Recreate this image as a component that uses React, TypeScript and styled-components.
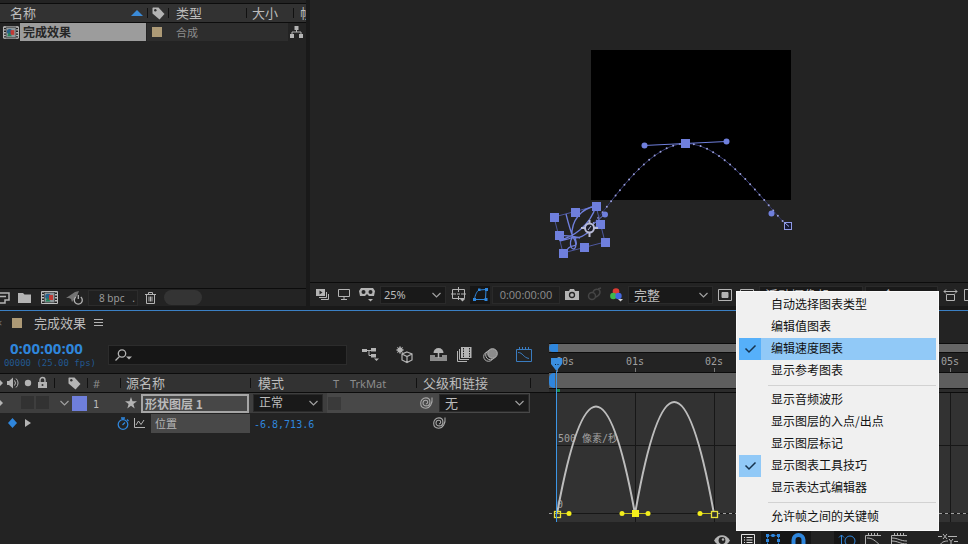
import React from "react";
import styled, { createGlobalStyle, css } from "styled-components";

const sans = `"Noto Sans", "Noto Sans CJK SC", sans-serif`;
const cjk = `"Noto Sans CJK SC", sans-serif`;
const mono = `"DejaVu Sans Mono", "Noto Sans CJK SC", monospace`;

const c = {
  panel: "#232323",
  gap: "#191919",
  head: "#323232",
  line: "#0c0c0c",
  field: "#191919",
  text: "#bcbcbc",
  dim: "#8c8c8c",
  icon: "#b4b4b4",
  blue: "#2f86dc",
  lilac: "#6f7fdc",
};

const GlobalStyle = createGlobalStyle`
  *, *::before, *::after { box-sizing: border-box; }
  body { margin: 0; background: ${c.gap}; overflow: hidden; }
  button, input, select { font: inherit; color: inherit; margin: 0; }
  svg { display: block; flex: none; overflow: visible; }
`;

const Page = styled.div`
  position: relative;
  min-height: 100vh;
  display: flex;
  flex-direction: column;
  overflow: hidden;
  font: 13px/18px ${cjk};
  color: ${c.text};
`;

const Upper = styled.div`
  flex: 1;
  display: grid;
  grid-template-columns: minmax(0, 306fr) minmax(0, 658fr);
  gap: 4px;
  padding-bottom: 4px;
`;

const Panel = styled.section`
  display: flex;
  flex-direction: column;
  min-width: 0;
  overflow: hidden;
  background: ${c.panel};
`;

const Toolbar = styled.div<{ $h: number }>`
  display: flex;
  align-items: center;
  gap: 2px;
  height: ${(p) => p.$h}px;
  padding-left: 2px;
  border-top: 1px solid ${c.line};
  overflow: hidden;
`;

const IconButton = styled.button<{ $w?: number; $on?: boolean }>`
  display: flex;
  flex: none;
  align-items: center;
  justify-content: center;
  width: ${(p) => p.$w ?? 20}px;
  height: 18px;
  padding: 0;
  border: 0;
  color: ${(p) => (p.$on ? c.blue : c.icon)};
  background: ${(p) => (p.$on ? "#161616" : "none")};
`;

/* project panel */

const ProjectTable = styled.table`
  width: 100%;
  margin-top: 3px;
  table-layout: fixed;
  border-collapse: separate;
  border-spacing: 0;
`;

const headCell = css`
  height: 20px;
  padding: 0 0 0 8px;
  border: solid ${c.line};
  border-width: 1px 0;
  background: ${c.head};
  font-weight: 400;
  text-align: left;
  white-space: nowrap;
  overflow: hidden;
`;

const Th = styled.th<{ $bar?: boolean; $pad?: number }>`
  ${headCell}
  padding-left: ${(p) => p.$pad ?? 8}px;
  background: ${(p) =>
    p.$bar ? `linear-gradient(#111, #111) 0 4px / 1px 10px no-repeat ${c.head}` : c.head};
`;

const HeadFlex = styled.div<{ $gap?: number }>`
  display: flex;
  align-items: center;
  gap: ${(p) => p.$gap ?? 6}px;
`;

const Push = styled.span`
  margin-left: auto;
  padding-right: 4px;
`;

const ProjTd = styled.td<{ $shade?: boolean }>`
  height: 18px;
  padding: 0 0 0 8px;
  background: ${(p) => (p.$shade ? "#2d2d2d" : "none")};
  color: ${c.dim};
  font-size: 11px;
  &:first-child { padding: 0 1px 0 3px; }
  &:nth-child(2) { padding-left: 5px; }
`;

const FlowCell = styled(ProjTd)`
  padding: 0 3px 0 0;
  background: linear-gradient(90deg, #2d2d2d 42px, transparent 42px);
  svg { margin-left: auto; }
`;

const ItemName = styled.span`
  flex: 1;
  height: 18px;
  padding-left: 3px;
  background: #9c9c9c;
  color: #262626;
  font-size: 12px;
  font-weight: 700;
`;

const Swatch = styled.span<{ $c: string; $s: number }>`
  display: block;
  flex: none;
  width: ${(p) => p.$s}px;
  height: ${(p) => p.$s}px;
  background: ${(p) => p.$c};
`;

const Spacer = styled.div`
  flex: 1;
`;

const DepthButton = styled.button`
  flex: none;
  width: 50px;
  height: 16px;
  padding: 0 0 0 8px;
  border: 1px solid #2c2c2c;
  background: #202020;
  color: #9a9a9a;
  font: 10px/14px ${sans};
`;

const Pill = styled.span`
  width: 38px;
  height: 15px;
  margin-left: 2px;
  border-radius: 8px;
  background: #343434;
`;

/* viewer */

const Canvas = styled.div`
  flex: 1;
  display: flex;
  overflow: hidden;
  svg { width: 100%; height: 100%; }
`;

const SelectBox = styled.label<{ $w?: number }>`
  display: grid;
  align-items: center;
  flex: none;
  width: ${(p) => (p.$w ? `${p.$w}px` : "100%")};
  height: 18px;
  border: 1px solid #2a2a2a;
  background: ${c.field};
  > * { grid-area: 1 / 1; }
  > svg { justify-self: end; margin-right: 4px; pointer-events: none; }
`;

const Select = styled.select<{ $fs?: number; $pad?: number }>`
  width: 100%;
  height: 16px;
  padding: 0 0 0 ${(p) => p.$pad ?? 5}px;
  border: 0;
  appearance: none;
  background: none;
  color: ${c.text};
  font: ${(p) => p.$fs ?? 13}px/16px ${sans};
`;

const TimeField = styled.button`
  flex: none;
  width: 68px;
  height: 18px;
  padding: 0;
  border: 1px solid #2a2a2a;
  background: #1e1e1e;
  color: #8e8e8e;
  font: 11px/16px "Open Sans", sans-serif;
`;

/* timeline */

const Timeline = styled.section`
  display: flex;
  flex-direction: column;
  border-top: 1px solid #3b80c4;
  background: ${c.panel};
`;

const TabRow = styled.div`
  display: flex;
  align-items: center;
  height: 25px;
  padding-bottom: 2px;
`;

const CloseTab = styled.button`
  width: 12px;
  padding: 0;
  border: 0;
  background: none;
  color: #777;
  font: 11px/18px ${sans};
  text-align: left;
  text-indent: -4px;
`;

const TabName = styled.h2`
  margin: 0 8px 0 12px;
  font-size: 13px;
  font-weight: 400;
  line-height: 18px;
`;

const Split = styled.div`
  display: grid;
  grid-template-columns: minmax(0, 549fr) minmax(0, 419fr);
`;

const Side = styled.div`
  min-width: 0;
  overflow: hidden;
`;

const TimeRow = styled.div`
  display: flex;
  align-items: center;
  height: 37px;
  padding-right: 12px;
`;

const TimeBlock = styled.div`
  width: 108px;
  flex: none;
`;

const Timecode = styled.div`
  padding-left: 10px;
  color: ${c.blue};
  font: 700 15px/16px "Open Sans", sans-serif;
`;

const Fps = styled.div`
  display: flex;
  justify-content: flex-end;
  width: 96px;
  color: #22588f;
  font: 9px/14px ${mono};
  white-space: nowrap;
`;

const Search = styled.label`
  display: flex;
  align-items: center;
  flex: 1;
  height: 20px;
  margin-right: 10px;
  padding-left: 6px;
  border: 1px solid #2c2c2c;
  background: #161616;
  color: ${c.icon};
`;

const SearchInput = styled.input`
  flex: 1;
  min-width: 0;
  padding: 0 4px;
  border: 0;
  outline: 0;
  background: none;
`;

const Group = styled.div`
  display: flex;
  margin-right: 8px;
  &:last-child { margin-right: 0; }
`;

const LayerTable = styled.table`
  width: 100%;
  table-layout: fixed;
  border-collapse: separate;
  border-spacing: 0;
`;

const Small = styled.span`
  color: ${c.dim};
  font: 11px/16px ${sans};
`;

const Index = styled.span`
  color: ${c.text};
  font: 10px/16px ${mono};
`;

const Td = styled.td<{ $bg?: string; $pad?: number }>`
  height: 20px;
  padding: 0 0 0 ${(p) => p.$pad ?? 0}px;
  background: ${(p) => p.$bg ?? "none"};
`;

const Cells = styled.div<{ $gap?: number; $end?: boolean }>`
  display: flex;
  align-items: center;
  height: 20px;
  gap: ${(p) => p.$gap ?? 4}px;
  justify-content: ${(p) => (p.$end ? "flex-end" : "flex-start")};
`;

const NameInput = styled.input`
  flex: 1;
  min-width: 0;
  height: 19px;
  margin-right: 1px;
  padding: 0 2px;
  border: 2px solid #a6a6a6;
  outline: 0;
  background: #474747;
  color: #bababa;
  font: 700 12px/15px ${cjk};
`;

const PropName = styled.span`
  width: 99px;
  height: 19px;
  margin-left: 2px;
  padding-left: 4px;
  background: #484848;
  color: #b4b4b4;
  font-size: 11px;
`;

const Value = styled.span`
  color: ${c.blue};
  font: 10px/16px ${mono};
`;

const GraphPane = styled.div`
  position: relative;
  min-width: 0;
  padding-top: 7px;
  overflow: hidden;
`;

const Track = styled.div<{ $h: number; $c: string; $handle: number }>`
  height: ${(p) => p.$h}px;
  border: solid ${c.line};
  border-width: 1px 0;
  background: ${(p) => p.$c};
  &::before {
    content: "";
    display: block;
    width: ${(p) => p.$handle}px;
    height: 100%;
    border-radius: 5px 0 0 5px;
    background: ${c.blue};
  }
`;

const Chart = styled.svg<{ $h: number }>`
  width: 100%;
  height: ${(p) => p.$h}px;
  text { font: 10px ${mono}; fill: #a0a0a0; }
`;

const CacheStrip = styled.div`
  height: 4px;
  border-bottom: 1px solid ${c.line};
  background: linear-gradient(#1d8a4e, #1d8a4e) 8px 0 / 3px 3px no-repeat #2b2b2b;
`;

const Playhead = styled.svg`
  position: absolute;
  top: 22px;
  left: 2px;
  width: 12px;
  height: 164px;
`;

const BottomBar = styled.div`
  display: flex;
  justify-content: flex-end;
  align-items: flex-start;
  height: 22px;
  padding: 9px 7px 0 0;
  overflow: hidden;
`;

const BarGap = styled.span`
  width: 23px;
`;

/* context menu */

const Menu = styled.div`
  position: absolute;
  right: 29px;
  bottom: 13px;
  width: 203px;
  padding: 2px;
  border: 1px solid #fafafa;
  background: #f0f0f0;
  color: #111;
  font: 12px/20px ${cjk};
`;

const MenuItem = styled.button<{ $active?: boolean }>`
  display: flex;
  width: 100%;
  height: 22px;
  padding: 0;
  border: 0;
  background: ${(p) => (p.$active ? "#91c9f7" : "none")};
  text-align: left;
`;

const CheckSlot = styled.span<{ $checked?: boolean; $active?: boolean }>`
  display: flex;
  align-items: center;
  justify-content: center;
  width: 22px;
  height: 22px;
  margin-right: 10px;
  background: ${(p) => (p.$checked ? (p.$active ? "#56b0fa" : "#91c9f7") : "none")};
`;

const Separator = styled.hr`
  height: 1px;
  margin: 3px 0 3px 29px;
  border: 0;
  background: #d2d2d2;
`;

/* icons */

const Chevron = () => (
  <svg width="9" height="6" viewBox="0 0 9 6" fill="none" stroke="#a0a0a0" strokeWidth="1.2">
    <path d="M0.5 1l4 4 4-4" />
  </svg>
);

const TagIcon = () => (
  <svg width="13" height="13" viewBox="0 0 13 13">
    <path d="M1 0.5h5.5l6 6.5-5 5.5L0.5 6.5V1z" fill={c.icon} />
    <circle cx="3.3" cy="3.3" r="1.2" fill={c.head} />
  </svg>
);

const FilmComp = ({ w = 17 }: { w?: number }) => (
  <svg width={w} height="13" viewBox="0 0 17 13">
    <path d="M0.5 0.5h16v12H0.5z" fill="#222" stroke="#c0c0c0" />
    <path d="M2 0v13M15 0v13" stroke="#c0c0c0" strokeWidth="2" strokeDasharray="1.5 1.5" />
    <path d="M3.5 1.500v10h10v-10z" fill="#8f979b" />
    <circle cx="7" cy="5.500" r="2.800" fill="#24608c" />
    <path d="M8 4h4v5H8z" fill="#c03a34" />
    <path d="M6.500 6l3 4.500h-5z" fill="#23835a" />
  </svg>
);

const Swirl = () => (
  <svg width="13" height="12" viewBox="0 0 13 12" fill="none" stroke="#a8a8a8" strokeWidth="1.1">
    <path d="M12 0.5C12.8 6 10 11.2 5.500 11.2 2.500 11.2 0.700 9 0.700 6.300 0.700 3.200 3 0.900 5.900 0.900 8.400 0.900 9.900 2.700 9.900 4.900 9.900 7.300 8.300 8.900 6.200 8.900 4.300 8.900 3 7.700 3 6 3 4.400 4.200 3.200 5.800 3.200 7 3.200 7.700 4 7.700 5.100 7.700 6.200 6.900 6.900 5.900 6.800" />
  </svg>
);

const Handle = ({ x, y }: { x: number; y: number }) => (
  <rect x={x - 4} y={y - 4} width="9" height="9" fill={c.lilac} />
);

const corners = [
  [554, 217], [575, 212], [596, 206], [600, 224],
  [605, 242], [584, 247], [563, 253], [559, 235],
];

const MotionPath = () => (
  <svg role="img" aria-label="合成预览">
    <g transform="translate(-310 0)">
      <rect x="591" y="50" width="200" height="150" fill="#000" />
      <g fill="none">
        <path
          d="M589 228C605 214 644 145 685 143.500C726 142 771 213 788 226"
          stroke="#34386f"
        />
        <path
          d="M589 228C605 214 644 145 685 143.500C726 142 771 213 788 226"
          stroke="#9a9fda"
          strokeWidth="2"
          strokeLinecap="round"
          strokeDasharray="0 7"
        />
        <path d="M644 145.500L726 141.500M589 228L605 214" stroke={c.lilac} />
        <path d="M554 217L596 206 605 242 563 253z" stroke="#4d589f" />
        <path
          d="M559 240C572 238 590 226 596 206C582 208 571 220 572 236M566 214C568 222 570 230 573 237C568 240 562 240 560 241M573 237C569 241 570 249 574 249C577 247 576 241 573 237C580 240 586 234 600 224M566 252C570 240 580 252 575 238M560 236c6-1 12 0 20 2"
          stroke={c.lilac}
          strokeWidth="1.300"
        />
      </g>
      {corners.map(([x, y]) => (
        <Handle key={x} x={x} y={y} />
      ))}
      <g fill={c.lilac}>
        <circle cx="605" cy="214.500" r="3" />
        <circle cx="644.500" cy="145.500" r="3" />
        <circle cx="726.500" cy="141.500" r="3" />
        <circle cx="771.500" cy="213.500" r="3" />
        <rect x="681" y="139" width="9" height="9" />
      </g>
      <g stroke="#b9bcd8" fill="none">
        <circle cx="589.500" cy="228" r="4.500" fill="#1c1d28" strokeWidth="2" />
        <path d="M589.500 220v4M589.500 232v5M581 228h4M594 228h4" strokeWidth="2" />
        <path d="M588 230l3-4" />
      </g>
      <rect x="784.500" y="222.500" width="7" height="7" fill="#161a33" stroke="#8f9ae6" />
      <path d="M785 223l4 3.500" stroke="#9aa4f0" />
    </g>
  </svg>
);

const starts = [0, 78, 157, 236, 315, 393];

const menu: Array<null | { t: string; checked?: boolean; active?: boolean }> = [
  { t: "自动选择图表类型" },
  { t: "编辑值图表" },
  { t: "编辑速度图表", checked: true, active: true },
  { t: "显示参考图表" },
  null,
  { t: "显示音频波形" },
  { t: "显示图层的入点/出点" },
  { t: "显示图层标记" },
  { t: "显示图表工具技巧", checked: true },
  { t: "显示表达式编辑器" },
  null,
  { t: "允许帧之间的关键帧" },
];

type DropDownProps = { label: string; value: string; w?: number; fs?: number; pad?: number };

const DropDown = ({ label, value, w, fs, pad }: DropDownProps) => (
  <SelectBox $w={w}>
    <Select aria-label={label} $fs={fs} $pad={pad} defaultValue={value}>
      <option>{value}</option>
    </Select>
    <Chevron />
  </SelectBox>
);

const ProjectPanel = () => (
  <Panel>
    <ProjectTable>
      <colgroup>
        <col />
        <col width="21" />
        <col width="78" />
        <col width="47" />
        <col width="13" />
      </colgroup>
      <thead>
        <tr>
          <Th $pad={10}>
            <HeadFlex>
              名称
              <Push>
                <svg width="12" height="6" viewBox="0 0 12 6"><path d="M6 0l6 6H0z" fill="#3b8bd8" /></svg>
              </Push>
            </HeadFlex>
          </Th>
          <Th $bar $pad={5}><TagIcon /></Th>
          <Th $bar>类型</Th>
          <Th $bar $pad={6}>大小</Th>
          <Th $bar $pad={7}>帧</Th>
        </tr>
      </thead>
      <tbody>
        <tr>
          <ProjTd>
            <HeadFlex $gap={1}>
              <FilmComp w={16} />
              <ItemName>完成效果</ItemName>
            </HeadFlex>
          </ProjTd>
          <ProjTd $shade><Swatch $c="#ad9a76" $s={10} /></ProjTd>
          <ProjTd $shade>合成</ProjTd>
          <FlowCell colSpan={2}>
            <svg width="13" height="12" viewBox="0 0 13 12">
              <path d="M4.500 0h4v4h-4zM0 8h4v4H0zM9 8h4v4H9z" fill={c.icon} />
              <path d="M6.500 3v3M2 8V6h9v2" stroke={c.icon} fill="none" />
            </svg>
          </FlowCell>
        </tr>
      </tbody>
    </ProjectTable>
    <Spacer />
    <Toolbar $h={18}>
      <IconButton $w={10} aria-label="解释素材">
        <svg width="14" height="12" viewBox="0 0 14 12" fill="none" stroke={c.icon} strokeWidth="1.500">
          <path d="M0 1h9v7H5v3H0M0 4.500h6" />
        </svg>
      </IconButton>
      <IconButton aria-label="新建文件夹">
        <svg width="13" height="10" viewBox="0 0 13 10"><path d="M0 0h5l1.500 1.500H13V10H0z" fill={c.icon} /></svg>
      </IconButton>
      <IconButton $w={26} aria-label="新建合成"><FilmComp /></IconButton>
      <IconButton $w={22} aria-label="项目设置">
        <svg width="18" height="13" viewBox="0 0 18 13">
          <path d="M0 7L9 1l4-1-2 5-5 6-1-3-2-1z" fill="#747474" />
          <path d="M9.800 6a4 4 0 1 0 5 0M12.300 4v4" stroke={c.icon} strokeWidth="1.300" fill="none" />
        </svg>
      </IconButton>
      <DepthButton>8 bpc&nbsp;&nbsp; .</DepthButton>
      <IconButton aria-label="删除">
        <svg width="11" height="12" viewBox="0 0 11 12" fill="none" stroke={c.icon}>
          <path d="M0 2.500h11M3.500 2V0.500h4V2M1.500 3v8.500h8V3M4 4.500v5M5.500 4.500v5M7 4.500v5" />
        </svg>
      </IconButton>
      <Pill />
    </Toolbar>
  </Panel>
);

const ViewerPanel = () => (
  <Panel>
    <Canvas><MotionPath /></Canvas>
    <Toolbar $h={24}>
      <IconButton aria-label="始终预览此视图">
        <svg width="13" height="11" viewBox="0 0 13 11">
          <path d="M0 0h9v7H0z" fill={c.icon} />
          <path d="M3.500 1.500v4l3-2z" fill={c.panel} />
          <path d="M3 8.500h7.500V3M5 10.500h7.500V5" stroke={c.icon} fill="none" />
        </svg>
      </IconButton>
      <IconButton aria-label="主查看器">
        <svg width="12" height="11" viewBox="0 0 12 11" fill="none" stroke={c.icon}>
          <path d="M0.500 0.500h11v7h-11zM6 8v2M3 10.500h6" />
        </svg>
      </IconButton>
      <IconButton $w={22} aria-label="沉浸式视频">
        <svg width="16" height="14" viewBox="0 0 16 14">
          <path d="M2 0h12l2 3-1 5H10L8 6 6 8H1L0 3z" fill={c.icon} />
          <circle cx="4.500" cy="4" r="2" fill={c.panel} />
          <circle cx="11.500" cy="4" r="2" fill={c.panel} />
          <path d="M9 11h5l-2.500 2.500z" fill={c.icon} />
        </svg>
      </IconButton>
      <DropDown label="放大率" value="25%" w={66} fs={11} pad={3} />
      <IconButton aria-label="网格和参考线">
        <svg width="15" height="15" viewBox="0 0 15 15" fill="none" stroke={c.icon}>
          <path d="M1.500 2.500h12v9h-12zM0 7h5M10 7h5M7.500 0v5M7.500 9v4M6 7h3" />
          <path d="M9 12h5l-2.500 2.500z" fill={c.icon} stroke="none" />
        </svg>
      </IconButton>
      <IconButton $on aria-label="切换蒙版可见性">
        <svg width="15" height="13" viewBox="0 0 15 13" fill="none" stroke={c.blue}>
          <path d="M1.500 11.500C2 7 4 3 6 2l7-0.500-0.500 10z" />
          <path d="M0 10h3v3H0zM5 0.500h2.500V3H5zM12 0h3v3h-3zM11.500 10h3v3h-3z" fill={c.blue} stroke="none" />
        </svg>
      </IconButton>
      <TimeField>0:00:00:00</TimeField>
      <IconButton aria-label="拍摄快照">
        <svg width="14" height="11" viewBox="0 0 14 11">
          <path d="M0 2h4l1-2h4l1 2h4v9H0z" fill={c.icon} />
          <circle cx="7" cy="6" r="2.500" fill="none" stroke={c.panel} strokeWidth="1.300" />
        </svg>
      </IconButton>
      <IconButton aria-label="显示快照">
        <svg width="15" height="13" viewBox="0 0 15 13" fill="none" stroke="#454545" strokeWidth="1.500">
          <circle cx="5" cy="8" r="3.500" /><path d="M6 4c2-4 7-3 7 0s-2 4-4 5M11 1l3-1" />
        </svg>
      </IconButton>
      <IconButton aria-label="通道">
        <svg width="13" height="14" viewBox="0 0 13 14">
          <circle cx="6" cy="3.500" r="3.300" fill="#dc3c34" />
          <circle cx="3.300" cy="8" r="3.200" fill="#3eb84c" />
          <circle cx="8.500" cy="8" r="3.200" fill="#4468e0" />
          <path d="M8 11h5l-2.500 2.500z" fill="#d0d0d0" />
        </svg>
      </IconButton>
      <DropDown label="分辨率" value="完整" w={85} />
      <IconButton aria-label="目标区域">
        <svg width="14" height="12" viewBox="0 0 14 12" fill="none" stroke={c.icon}>
          <path d="M0.500 0.500h13v11H0.500z" /><path d="M4 3.500h6v5H4z" fill={c.icon} />
        </svg>
      </IconButton>
      <IconButton aria-label="透明网格">
        <svg width="14" height="12" viewBox="0 0 14 12" fill="none" stroke={c.icon}>
          <path d="M0.500 0.500h13v11H0.500zM4 4h6v4H4z" />
        </svg>
      </IconButton>
      <DropDown label="3D 视图" value="活动摄像机" w={104} />
      <DropDown label="视图布局" value="1 个..." w={73} />
      <IconButton aria-label="像素长宽比校正">
        <svg width="15" height="12" viewBox="0 0 15 12" fill="none" stroke={c.icon}>
          <path d="M1 2.500h13M3 0.500l-2 2 2 2M12 0.500l2 2-2 2M3.500 5.500h8v6h-8z" />
        </svg>
      </IconButton>
      <IconButton aria-label="快速预览">
        <svg width="16" height="12" viewBox="0 0 16 12" fill="none" stroke={c.icon}>
          <path d="M0.500 0.500h15v11H0.500zM4 8l4-3" />
        </svg>
      </IconButton>
    </Toolbar>
  </Panel>
);

const TimelineTools = () => (
  <>
    <Group>
      <IconButton $w={26} aria-label="合成微型流程图">
        <svg width="17" height="15" viewBox="0 0 17 15" fill={c.icon}>
          <path d="M0 2h5v3H0zM9 1h5v3.500H9zM9 7h5v3.500H9z" />
          <path d="M5 3.500h4M7 3v5.500h2" stroke={c.icon} fill="none" />
          <path d="M12 11.500h5L14.500 14z" />
        </svg>
      </IconButton>
    </Group>
    <Group>
      <IconButton $w={26} aria-label="草图 3D">
        <svg width="17" height="17" viewBox="0 0 17 17" fill="none" stroke={c.icon} strokeWidth="1.200">
          <circle cx="4" cy="4" r="2.200" fill={c.icon} />
          <path d="M4 0v8M0 4h8M1.200 1.200l5.600 5.600M6.800 1.200L1.200 6.800" strokeWidth="0.800" />
          <path d="M11 6l5 2v6l-5 2.500L6 14V8zM6 8l5 2.500L16 8M11 10.500v6" />
        </svg>
      </IconButton>
    </Group>
    <Group>
      <IconButton $w={26} aria-label="隐藏图层">
        <svg width="17" height="13" viewBox="0 0 17 13">
          <path d="M0 7h5v2h7V7h5v6H0z" fill="#8c8c8c" />
          <path d="M3.500 5a5 5 0 0 1 10 0z" fill={c.icon} />
          <path d="M8.500 1v9" stroke={c.icon} strokeWidth="1.500" />
        </svg>
      </IconButton>
      <IconButton $w={26} aria-label="帧混合">
        <svg width="15" height="15" viewBox="0 0 15 15">
          <path d="M4 0h10.500v11H4z" fill={c.icon} />
          <path d="M6.500 1v9M12.500 1v9" stroke={c.panel} strokeDasharray="1.500 1" />
          <path d="M2.500 2v10.500H12M0.500 4v10.500H10" stroke={c.icon} fill="none" />
        </svg>
      </IconButton>
      <IconButton $w={26} aria-label="运动模糊">
        <svg width="15" height="14" viewBox="0 0 15 14" stroke={c.icon} fill="none">
          <circle cx="5.500" cy="8.500" r="4.800" /><circle cx="7.500" cy="7" r="4.800" fill={c.panel} />
          <circle cx="9.500" cy="5.500" r="4.800" fill="#8c8c8c" />
        </svg>
      </IconButton>
    </Group>
    <Group>
      <IconButton $w={26} aria-label="图表编辑器">
        <svg width="16" height="15" viewBox="0 0 16 15" fill="none" stroke="#3a7cc0">
          <path d="M0.500 2.500h15v12H0.500zM3.500 0v2M6.500 0v2M9.500 0v2M12.500 0v2M2 5.500c5 0 5 5 11 6" />
        </svg>
      </IconButton>
    </Group>
  </>
);

const Layers = () => (
  <LayerTable>
    <colgroup>
      <col width="54" />
      <col width="33" />
      <col width="33" />
      <col />
      <col width="77" />
      <col width="18" />
      <col width="71" />
      <col width="114" />
      <col width="19" />
    </colgroup>
    <thead>
      <tr>
        <Th $pad={0}>
          <svg width="48" height="12" viewBox="0 0 48 12">
            <path d="M0 3l3 3-3 3zM7 4h2l4-3.500v11L9 8H7z" fill={c.icon} />
            <path d="M14.500 3.500a4 4 0 0 1 0 5M16 1.500a6 6 0 0 1 0 9" stroke={c.icon} fill="none" />
            <circle cx="28" cy="6" r="3.200" fill={c.icon} />
            <path d="M38 5h9v6h-9z" fill={c.icon} />
            <path d="M40 5V3a2.500 2.500 0 0 1 5 0v2" stroke={c.icon} strokeWidth="1.400" fill="none" />
            <circle cx="42.500" cy="8" r="1" fill={c.head} />
          </svg>
        </Th>
        <Th $bar $pad={14}><TagIcon /></Th>
        <Th $bar $pad={6}><Small>#</Small></Th>
        <Th $bar $pad={6}>源名称</Th>
        <Th $bar>模式</Th>
        <Th $pad={6}><Small>T</Small></Th>
        <Th $pad={5}><Small>TrkMat</Small></Th>
        <Th $bar $pad={7}>父级和链接</Th>
        <Th $bar />
      </tr>
    </thead>
    <tbody>
      <tr>
        <Td $bg="#3e3e3e">
          <Cells>
            <svg width="50" height="14" viewBox="0 0 50 14">
              <path d="M0 4l3 3-3 3z" fill={c.icon} />
              <path d="M21 0h13v13H21zM36 0h13v13H36z" fill="#323232" />
            </svg>
          </Cells>
        </Td>
        <Td $bg="#3e3e3e">
          <Cells $gap={3} $end><Chevron /><Swatch $c={c.lilac} $s={15} /></Cells>
        </Td>
        <Td $bg="#3e3e3e" $pad={6}><Index>1</Index></Td>
        <Td $bg="#3e3e3e" $pad={5}>
          <Cells>
            <svg width="12" height="12" viewBox="0 0 12 12">
              <path d="M6 0l1.500 4.200H12L8.400 7 9.700 11.500 6 8.800 2.300 11.500 3.600 7 0 4.200h4.500z" fill={c.icon} />
            </svg>
            <NameInput aria-label="图层名称" defaultValue="形状图层 1" />
          </Cells>
        </Td>
        <Td $bg="#3e3e3e" $pad={3}><DropDown label="模式" value="正常" w={70} fs={12} /></Td>
        <Td $bg="#484848" $pad={1}><Swatch $c="#3a3a3a" $s={13} /></Td>
        <Td $bg="#484848" />
        <Td $bg="#484848" $pad={4}>
          <Cells $gap={6}><Swirl /><DropDown label="父级和链接" value="无" w={90} /></Cells>
        </Td>
        <Td />
      </tr>
      <tr>
        <Td $pad={8}>
          <Cells $gap={8}>
            <svg width="9" height="10" viewBox="0 0 9 10"><path d="M4.500 0L9 5l-4.500 5L0 5z" fill={c.blue} /></svg>
            <svg width="6" height="8" viewBox="0 0 6 8"><path d="M0 0l6 4-6 4z" fill={c.icon} /></svg>
          </Cells>
        </Td>
        <Td colSpan={3}>
          <Cells $end>
            <svg width="12" height="13" viewBox="0 0 12 13" fill="none" stroke={c.blue} strokeWidth="1.300">
              <circle cx="6" cy="7.500" r="4.800" /><path d="M4 1h4M6 1v2M10 2.500l1.500 1.500M5.500 8L8 5.500" />
            </svg>
            <svg width="12" height="11" viewBox="0 0 12 11" fill="none" stroke={c.icon}>
              <path d="M1.500 0v9.500H12M3 7l2.500-4L8 6.500 11 2" />
            </svg>
            <PropName>位置</PropName>
          </Cells>
        </Td>
        <Td colSpan={3} $pad={4}><Value>-6.8,713.6</Value></Td>
        <Td $pad={17}><Swirl /></Td>
        <Td />
      </tr>
    </tbody>
  </LayerTable>
);

const Graph = () => (
  <GraphPane>
    <Track $h={10} $c="#666" $handle={9} />
    <Chart $h={19}>
      {starts.map((s, i) => (
        <g key={s}>
          <text x={i === 0 ? 16 : s + 8} y="12" textAnchor="middle">{`0${i}s`}</text>
          <path d={`M${s + 8}.5 15v4`} stroke="#777" />
        </g>
      ))}
    </Chart>
    <Track $h={17} $c="#5e5e5e" $handle={6} />
    <CacheStrip />
    <Chart $h={129}>
      <rect x="7" y="0" width="100%" height="129" fill="#323232" />
      <g stroke="#171717">
        {starts.slice(1).map((s) => (
          <path key={s} d={`M${s + 8}.5 0v129`} />
        ))}
        <line x1="8" x2="100%" y1="52.500" y2="52.500" />
        <line x1="8" x2="100%" y1="120.500" y2="120.500" />
      </g>
      <line x1="0" x2="8" y1="120.500" y2="120.500" stroke="#999" strokeDasharray="3 3" />
      <line x1="168" x2="100%" y1="120.500" y2="120.500" stroke="#a0a0a0" strokeDasharray="3 3" />
      <text x="9" y="49">500 像素/秒</text>
      <text x="8" y="115">0</text>
      <g fill="none" stroke="#bdbdbd" strokeWidth="2">
        <path d="M8 121Q47 -94 86 121Q125 -103 165 121" />
      </g>
      <g stroke="#c9c21e" fill="none">
        <path d="M8 120.500h13M73 120.500h26M151 120.500h14" />
        <rect x="5.500" y="118.500" width="6" height="6" stroke="#e8e23a" strokeWidth="1.300" />
        <rect x="162.500" y="118.500" width="6" height="6" fill="#323232" stroke="#e8e23a" strokeWidth="1.300" />
      </g>
      <g fill="#f4ee1c">
        <circle cx="20" cy="120.500" r="2.500" />
        <circle cx="73" cy="120.500" r="2.500" />
        <circle cx="99" cy="120.500" r="2.500" />
        <circle cx="151" cy="120.500" r="2.500" />
        <rect x="83" y="117" width="7" height="7" />
      </g>
    </Chart>
    <Playhead>
      <path d="M5.500 13v151" stroke="#3c96e6" />
      <path d="M0 0h11v6l-5.500 7L0 6z" fill="#3a8fe0" />
      <path d="M4 6.500h1M6.500 6.500h1" stroke="#123" />
    </Playhead>
  </GraphPane>
);

const BottomTools = () => (
  <BottomBar>
    <IconButton $w={26} aria-label="选择显示的属性">
      <svg width="16" height="11" viewBox="0 0 16 11">
        <path d="M0 5.500C4-1.500 12-1.500 16 5.500 12 12.500 4 12.500 0 5.500z" fill={c.icon} />
        <circle cx="8" cy="5.500" r="3.400" fill={c.panel} /><circle cx="9" cy="4.500" r="1.200" fill={c.icon} />
      </svg>
    </IconButton>
    <IconButton $w={26} aria-label="选择图表类型和选项">
      <svg width="14" height="13" viewBox="0 0 14 13" fill="none" stroke="#e0e0e0">
        <path d="M0.500 0.500h13v12H0.500zM3 3.500h1M5.500 3.500h6M3 6h1M5.500 6h6M3 8.500h1M5.500 8.500h6" />
      </svg>
    </IconButton>
    <IconButton $on $w={24} aria-label="显示变换框">
      <svg width="16" height="15" viewBox="0 0 16 15" fill={c.blue}>
        <path d="M2.500 2.500h11v10h-11z" fill="none" stroke={c.blue} strokeDasharray="2 1" />
        <path d="M1 1h3v3H1zM6.500 1h3v3h-3zM12 1h3v3h-3zM1 6h3v3H1zM12 6h3v3h-3zM1 11h3v3H1zM12 11h3v3h-3z" />
      </svg>
    </IconButton>
    <IconButton $on $w={26} aria-label="对齐">
      <svg width="15" height="14" viewBox="0 0 15 14" fill="none" stroke={c.blue} strokeWidth="4">
        <path d="M2.500 14V7a5 5 0 0 1 10 0v7" />
      </svg>
    </IconButton>
    <BarGap />
    <IconButton $on $w={26} aria-label="适合选择">
      <svg width="17" height="13" viewBox="0 0 17 13" fill="none" stroke={c.blue}>
        <path d="M2.500 13V1M0 3.500L2.500 1 5 3.500" /><circle cx="11" cy="7" r="5" />
      </svg>
    </IconButton>
    <IconButton $w={26} aria-label="使选择适于查看">
      <svg width="16" height="14" viewBox="0 0 16 14" fill="none" stroke={c.icon}>
        <path d="M0.500 14V2.500H16M3.500 0v2M6.500 0v2M9.500 0v2M12.500 0v2M2 5c6 0 8 3 13 7" />
      </svg>
    </IconButton>
    <IconButton $w={26} aria-label="使所有图表适于查看">
      <svg width="16" height="14" viewBox="0 0 16 14" fill="none" stroke={c.icon}>
        <path d="M0.500 14V2.500H16M3.500 0v2M6.500 0v2M9.500 0v2M12.500 0v2M1 5c6 0 8 3 15 3M1 8c6 0 8 3 15 3" />
      </svg>
    </IconButton>
    <BarGap />
    <IconButton $w={26} aria-label="单独尺寸">
      <svg width="20" height="14" viewBox="0 0 20 14" fill="none" stroke={c.icon}>
        <path d="M0 3.500h4M10 3.500h9M5 1l4 5M9 1L5 6M11 6l2 2.500L15 6M13 8.500V11M16 8.500h4M1 14c2-5 5-6 9-6" />
      </svg>
    </IconButton>
  </BottomBar>
);

export default function App() {
  return (
    <>
      <GlobalStyle />
      <Page>
        <Upper>
          <ProjectPanel />
          <ViewerPanel />
        </Upper>
        <Timeline>
          <TabRow>
            <CloseTab aria-label="关闭">×</CloseTab>
            <Swatch $c="#ad9a76" $s={10} />
            <TabName>完成效果</TabName>
            <svg width="9" height="8" viewBox="0 0 9 8" stroke={c.icon}>
              <path d="M0 0.500h9M0 3.500h9M0 6.500h9" />
            </svg>
          </TabRow>
          <Split>
            <Side>
              <TimeRow>
                <TimeBlock>
                  <Timecode>0:00:00:00</Timecode>
                  <Fps>00000 (25.00 fps)</Fps>
                </TimeBlock>
                <Search>
                  <svg width="17" height="12" viewBox="0 0 17 12" fill="none" stroke={c.icon} strokeWidth="1.300">
                    <circle cx="7" cy="4.500" r="3.700" /><path d="M4.500 7.500L0.500 11.500" />
                    <path d="M11 7.500h6l-3 3z" fill={c.icon} stroke="none" />
                  </svg>
                  <SearchInput type="search" aria-label="搜索图层" />
                </Search>
                <TimelineTools />
              </TimeRow>
              <Layers />
            </Side>
            <Graph />
          </Split>
          <BottomTools />
        </Timeline>
        <Menu role="menu">
          {menu.map((m, i) =>
            m ? (
              <MenuItem key={m.t} role="menuitem" $active={m.active}>
                <CheckSlot $checked={m.checked} $active={m.active}>
                  {m.checked && (
                    <svg width="11" height="8" viewBox="0 0 11 8" fill="none" stroke="#16334d" strokeWidth="1.500">
                      <path d="M0.500 3.500l3.500 3.500 6.500-6.500" />
                    </svg>
                  )}
                </CheckSlot>
                {m.t}
              </MenuItem>
            ) : (
              <Separator key={i} />
            )
          )}
        </Menu>
      </Page>
    </>
  );
}
